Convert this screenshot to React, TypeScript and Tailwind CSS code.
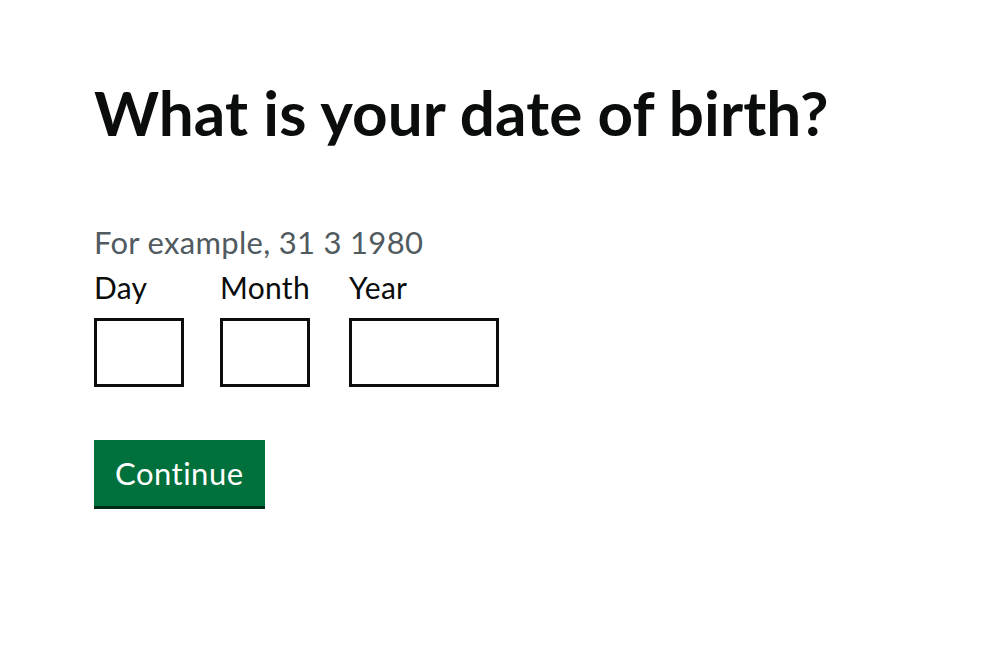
export default function App() {
  return (
    <div className="min-h-screen bg-white text-[#0b0c0c] [font-variant-ligatures:none]" style={{ fontFamily: "Lato, 'Noto Sans', sans-serif" }}>
      <main className="pl-[94px] pt-[78px]">
        <h1 className="text-[62px] font-bold leading-[1.1] tracking-[0.1px]">What is your date of birth?</h1>

        <div className="mt-[78px]">
          <p className="text-[31px] leading-[1.2] tracking-[0.3px] text-[#505a5f]">For example, 31 3 1980</p>
          <div className="mt-[8px] flex gap-[36px]">
            <div className="w-[90px]">
              <label className="block text-[30px] leading-[1.2] tracking-[0.3px]">Day</label>
              <input className="mt-[13px] block h-[69px] w-[90px] border-[3px] border-[#0b0c0c] px-2 text-[28px] outline-none" />
            </div>
            <div className="w-[93px]">
              <label className="block text-[30px] leading-[1.2] tracking-[0.3px]">Month</label>
              <input className="mt-[13px] block h-[69px] w-[90px] border-[3px] border-[#0b0c0c] px-2 text-[28px] outline-none" />
            </div>
            <div className="w-[150px]">
              <label className="block text-[30px] leading-[1.2] tracking-[0.3px]">Year</label>
              <input className="mt-[13px] block h-[69px] w-[150px] border-[3px] border-[#0b0c0c] px-2 text-[28px] outline-none" />
            </div>
          </div>
        </div>

        <button className="mt-[53px] h-[66px] bg-[#00703c] px-[21px] text-[31px] leading-none tracking-[0.5px] text-white shadow-[0_3px_0_#002d18]">
          Continue
        </button>
      </main>
    </div>
  );
}
